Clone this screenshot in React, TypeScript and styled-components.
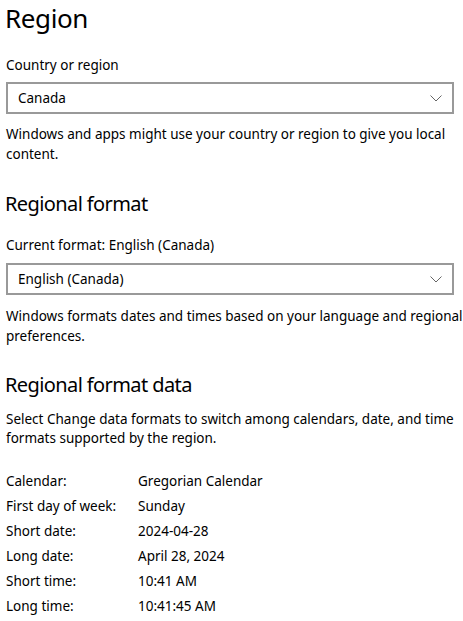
import React from 'react'
import styled, { createGlobalStyle } from 'styled-components'

const GlobalStyle = createGlobalStyle`
  html, body {
    margin: 0;
    padding: 0;
    background: #ffffff;
  }
  body {
    font-family: 'Noto Sans', 'Open Sans', sans-serif;
    color: #000000;
  }
`

const Page = styled.div`
  width: 463px;
  padding: 0 0 0 6px;
  box-sizing: border-box;
`

const Title = styled.h1`
  margin: 0 0 0 -1px;
  font-size: 26px;
  font-weight: 400;
  letter-spacing: -0.4px;
  line-height: 36px;
  height: 36px;
`

const Heading = styled.h2<{ $top: number }>`
  margin: ${p => p.$top}px 0 0 -1px;
  font-size: 20px;
  font-weight: 400;
  letter-spacing: -0.6px;
  line-height: 28px;
`

const Label = styled.div<{ $top: number }>`
  margin-top: ${p => p.$top}px;
  font-size: 13.5px;
  line-height: 20px;
`

const Text = styled.p<{ $top: number; $lh?: number }>`
  margin: ${p => p.$top}px 0 0;
  font-size: 13.5px;
  line-height: ${p => p.$lh ?? 20}px;
`

const Select = styled.div<{ $top: number }>`
  margin-top: ${p => p.$top}px;
  width: 448px;
  height: 32px;
  box-sizing: border-box;
  border: 2px solid #999999;
  display: flex;
  align-items: center;
  justify-content: space-between;
  padding: 0 10px 0 10px;
  font-size: 13.5px;
`

const Chevron = () => (
  <svg width="12" height="7" viewBox="0 0 12 7" fill="none">
    <path d="M0.5 0.5 L6 6 L11.5 0.5" stroke="#666" strokeWidth="1" />
  </svg>
)

const DataGrid = styled.div<{ $top: number }>`
  margin-top: ${p => p.$top}px;
  display: grid;
  grid-template-columns: 132px 1fr;
  grid-auto-rows: 25px;
  align-items: center;
  font-size: 13.5px;
`

const rows: [string, string][] = [
  ['Calendar:', 'Gregorian Calendar'],
  ['First day of week:', 'Sunday'],
  ['Short date:', '2024-04-28'],
  ['Long date:', 'April 28, 2024'],
  ['Short time:', '10:41 AM'],
  ['Long time:', '10:41:45 AM'],
]

export default function App() {
  return (
    <Page>
      <GlobalStyle />
      <Title>Region</Title>
      <Label $top={19}>Country or region</Label>
      <Select $top={7}>
        <span>Canada</span>
        <Chevron />
      </Select>
      <Text $top={10}>
        Windows and apps might use your country or region to give you local content.
      </Text>
      <Heading $top={26}>Regional format</Heading>
      <Label $top={17}>Current format: English (Canada)</Label>
      <Select $top={8}>
        <span>English (Canada)</span>
        <Chevron />
      </Select>
      <Text $top={11}>
        Windows formats dates and times based on your language and regional preferences.
      </Text>
      <Heading $top={25}>Regional format data</Heading>
      <Text $top={11} $lh={19}>
        Select Change data formats to switch among calendars, date, and time formats supported by the region.
      </Text>
      <DataGrid $top={20}>
        {rows.map(([k, v]) => (
          <React.Fragment key={k}>
            <span>{k}</span>
            <span>{v}</span>
          </React.Fragment>
        ))}
      </DataGrid>
    </Page>
  )
}
